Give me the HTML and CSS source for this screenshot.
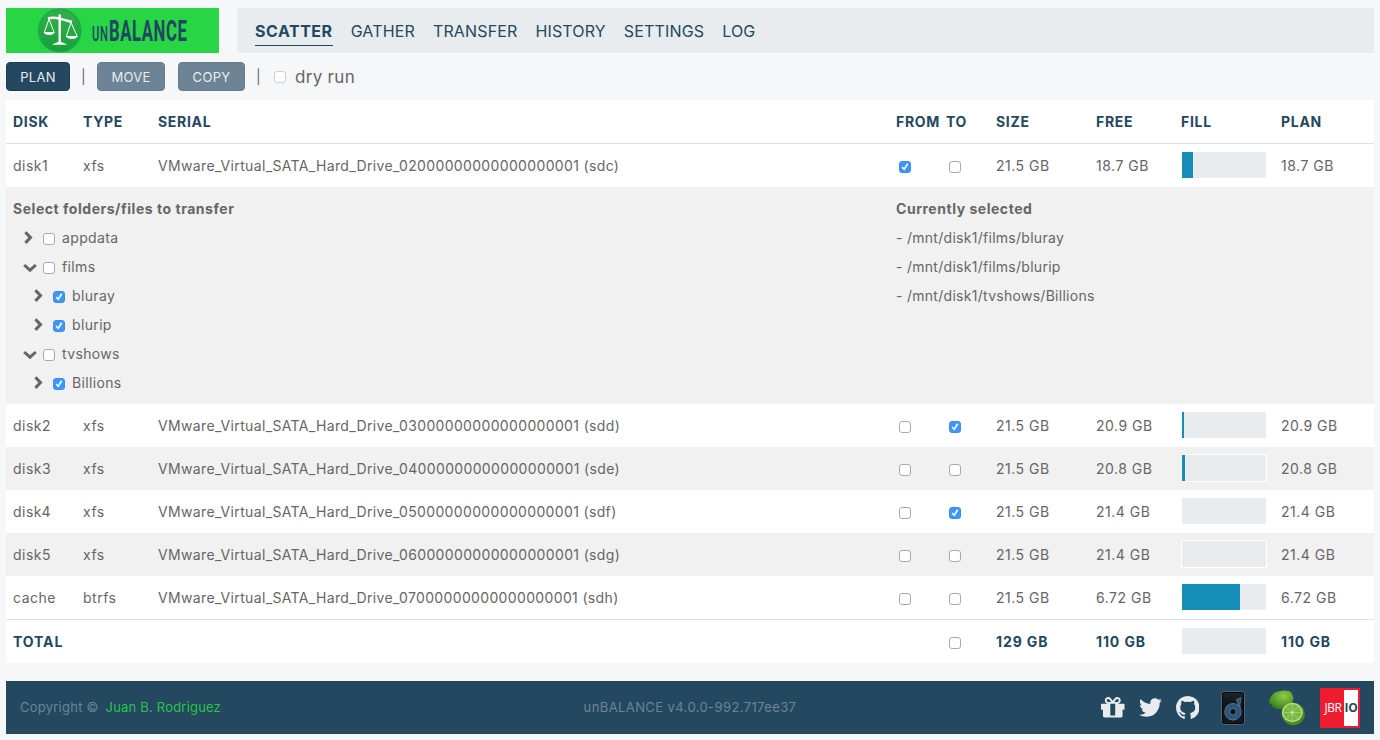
FILE: index.html
```html
<!DOCTYPE html>
<html lang="en">
<head>
<meta charset="utf-8">
<title>unBALANCE</title>
<link rel="stylesheet" href="styles.css">
</head>
<body>
<svg class="defs" width="0" height="0">
  <symbol id="right" viewBox="0 0 14 14"><path d="M2.400 1.300L7.500 6.600L2.400 11.900" fill="none" stroke="currentColor" stroke-width="3"/></symbol>
  <symbol id="down" viewBox="0 0 14 14"><path d="M1.200 5L7 10.200L12.800 5" fill="none" stroke="currentColor" stroke-width="3"/></symbol>
</svg>
<header class="header">
  <a class="logo">
    <svg width="86" height="45" viewBox="0 0 86 45">
      <defs><linearGradient id="disc" x1="0" y1="0" x2="0" y2="1"><stop offset="0" stop-color="#35b04b"/><stop offset="1" stop-color="#16a03a"/></linearGradient></defs>
      <circle cx="53.700" cy="22.500" r="21.200" fill="url(#disc)" stroke="#1da84c" stroke-width="1.400"/>
      <g fill="none" stroke="#fff">
        <path d="M42 10.200Q48 9 53.700 10.600T66 14" stroke-width="2.400"/>
        <path d="M53.700 6.500V35" stroke-width="2.400"/>
        <path d="M43 11L38.500 24M43 11L48 24M65 14.500L60.500 28M65 14.500L71 28" stroke-width="1"/>
      </g>
      <path d="M37.500 24H49Q47.500 27 43.200 27T37.500 24ZM59.500 28H72Q70.500 31 66 31T59.500 28ZM46 36.800Q50 34.300 53.700 33.500Q57.500 34.300 61 36.800Z" fill="#fff"/>
    </svg>
    <span class="word un">UN</span><span class="word balance">BALANCE</span>
  </a>
  <nav class="nav">
    <a class="nav-item active">SCATTER</a><a class="nav-item">GATHER</a><a class="nav-item">TRANSFER</a><a class="nav-item">HISTORY</a><a class="nav-item">SETTINGS</a><a class="nav-item">LOG</a>
  </nav>
</header>
<section class="toolbar">
  <button class="btn plan">PLAN</button><span class="sep">|</span><button class="btn move" disabled>MOVE</button><button class="btn copy" disabled>COPY</button><span class="sep">|</span>
  <label class="dry"><input class="check" type="checkbox" disabled>dry run</label>
</section>
<main class="table">
  <div class="row head"><span>DISK</span><span>TYPE</span><span>SERIAL</span><span>FROM</span><span>TO</span><span>SIZE</span><span>FREE</span><span>FILL</span><span>PLAN</span></div>
  <div class="row"><span>disk1</span><span>xfs</span><span class="serial">VMware_Virtual_SATA_Hard_Drive_02000000000000000001 (sdc)</span><span><input class="check" type="checkbox" checked></span><span><input class="check" type="checkbox"></span><span>21.5 GB</span><span>18.7 GB</span><span><i class="bar"><b style="width:11px"></b></i></span><span>18.7 GB</span></div>
  <div class="panel">
    <div class="tree">
      <h2>Select folders/files to transfer</h2>
      <div class="node"><svg class="chev"><use href="#right"/></svg><input class="check" type="checkbox">appdata</div>
      <div class="node"><svg class="chev"><use href="#down"/></svg><input class="check" type="checkbox">films</div>
      <div class="node child"><svg class="chev"><use href="#right"/></svg><input class="check" type="checkbox" checked>bluray</div>
      <div class="node child"><svg class="chev"><use href="#right"/></svg><input class="check" type="checkbox" checked>blurip</div>
      <div class="node"><svg class="chev"><use href="#down"/></svg><input class="check" type="checkbox">tvshows</div>
      <div class="node child"><svg class="chev"><use href="#right"/></svg><input class="check" type="checkbox" checked>Billions</div>
    </div>
    <div class="selected">
      <h2>Currently selected</h2>
      <div>- /mnt/disk1/films/bluray</div>
      <div>- /mnt/disk1/films/blurip</div>
      <div>- /mnt/disk1/tvshows/Billions</div>
    </div>
  </div>
  <div class="row"><span>disk2</span><span>xfs</span><span class="serial">VMware_Virtual_SATA_Hard_Drive_03000000000000000001 (sdd)</span><span><input class="check" type="checkbox"></span><span><input class="check" type="checkbox" checked></span><span>21.5 GB</span><span>20.9 GB</span><span><i class="bar"><b style="width:2px"></b></i></span><span>20.9 GB</span></div>
  <div class="row alt"><span>disk3</span><span>xfs</span><span class="serial">VMware_Virtual_SATA_Hard_Drive_04000000000000000001 (sde)</span><span><input class="check" type="checkbox"></span><span><input class="check" type="checkbox"></span><span>21.5 GB</span><span>20.8 GB</span><span><i class="bar"><b style="width:3px"></b></i></span><span>20.8 GB</span></div>
  <div class="row"><span>disk4</span><span>xfs</span><span class="serial">VMware_Virtual_SATA_Hard_Drive_05000000000000000001 (sdf)</span><span><input class="check" type="checkbox"></span><span><input class="check" type="checkbox" checked></span><span>21.5 GB</span><span>21.4 GB</span><span><i class="bar"></i></span><span>21.4 GB</span></div>
  <div class="row alt"><span>disk5</span><span>xfs</span><span class="serial">VMware_Virtual_SATA_Hard_Drive_06000000000000000001 (sdg)</span><span><input class="check" type="checkbox"></span><span><input class="check" type="checkbox"></span><span>21.5 GB</span><span>21.4 GB</span><span><i class="bar"></i></span><span>21.4 GB</span></div>
  <div class="row"><span>cache</span><span>btrfs</span><span class="serial">VMware_Virtual_SATA_Hard_Drive_07000000000000000001 (sdh)</span><span><input class="check" type="checkbox"></span><span><input class="check" type="checkbox"></span><span>21.5 GB</span><span>6.72 GB</span><span><i class="bar"><b style="width:58px"></b></i></span><span>6.72 GB</span></div>
  <div class="row total"><span>TOTAL</span><span></span><span></span><span></span><span><input class="check" type="checkbox"></span><span>129 GB</span><span>110 GB</span><span><i class="bar"></i></span><span>110 GB</span></div>
</main>
<footer class="footer">
  <div class="copyright">Copyright © <a>Juan B. Rodriguez</a></div>
  <div class="version">unBALANCE v4.0.0-992.717ee37</div>
  <div class="links">
    <svg class="gift" viewBox="128 128 1536 1536"><path d="M1056 1356v-716h-320v716q0 25 18 38.500t46 13.500h192q28 0 46-13.500t18-38.500zm-456-844h195l-126-161q-26-31-69-31-40 0-68 28t-28 68 28 68 68 28zm688-96q0-40-28-68t-68-28q-43 0-69 31l-125 161h194q40 0 68-28t28-68zm376 256v320q0 14-9 23t-23 9h-96v416q0 40-28 68t-68 28h-1088q-40 0-68-28t-28-68v-416h-96q-14 0-23-9t-9-23v-320q0-14 9-23t23-9h440q-93 0-158.500-65.500t-65.500-158.500 65.500-158.500 158.500-65.500q107 0 168 77l128 165 128-165q61-77 168-77 93 0 158.500 65.500t65.500 158.500-65.500 158.500-158.500 65.500h440q14 0 23 9t9 23z"/></svg>
    <svg class="twitter" viewBox="108 128 1576 1536"><path d="M1684 408q-67 98-162 167 1 14 1 42 0 130-38 259.500t-115.500 248.500-184.500 210.500-258 146-323 54.500q-271 0-496-145 35 4 78 4 225 0 401-138-105-2-188-64.500t-114-159.500q33 5 61 5 43 0 85-11-112-23-185.500-111.500t-73.500-205.500v-4q68 38 146 41-66-44-105-115t-39-154q0-88 44-163 121 149 294.500 238.500t371.500 99.500q-8-38-8-74 0-134 94.500-228.500t228.500-94.500q140 0 236 102 109-21 205-78-37 115-142 178 93-10 186-50z"/></svg>
    <svg class="github" viewBox="128 128 1536 1536"><path d="M896 128q209 0 385.500 103t279.500 279.500 103 385.500q0 251-146.500 451.500t-378.500 277.500q-27 5-40-7t-13-30q0-3 .5-76.500t.5-134.500q0-97-52-142 57-6 102.500-18t94-39 81-66.500 53-105 20.500-150.500q0-119-79-206 37-91-8-204-28-9-81 11t-92 44l-38 24q-93-26-192-26t-192 26q-16-11-42.500-27t-83.500-38.500-85-13.500q-45 113-8 204-79 87-79 206 0 85 20.500 150t52.500 105 80.500 67 94 39 102.500 18q-39 36-49 103-21 10-45 15t-57 5-65.500-21.500-55.500-62.500q-19-32-48.500-52t-49.500-24l-20-3q-21 0-29 4.500t-5 11.500 9 14 13 12l7 5q22 10 43.500 38t31.500 51l10 23q13 38 44 61.500t67 30 69.500 7 55.500-3.500l23-4q0 38 .5 88.500t.5 54.500q0 18-13 30t-40 7q-232-77-378.500-277.500t-146.500-451.500q0-209 103-385.500t279.500-279.500 385.500-103z"/></svg>
    <svg class="disk" viewBox="0 0 26 36">
      <defs><linearGradient id="case" x1="0" y1="0" x2="0" y2="1"><stop offset="0" stop-color="#1d242b"/><stop offset=".5" stop-color="#0c1116"/><stop offset="1" stop-color="#151b21"/></linearGradient></defs>
      <rect x="1.500" y="1.500" width="23" height="33" rx="3" fill="url(#case)" stroke="#607381" stroke-width=".8"/>
      <rect x="2.500" y="2.500" width="21" height="31" rx="2" fill="none" stroke="#05090c"/>
      <path d="M16.400 9.500L21 7.500L20.200 13.500L19.800 20L17.300 17.500L17.700 13.500Z" fill="#2a587d" stroke="#6e8798" stroke-width=".6"/>
      <circle cx="13" cy="21.700" r="5.700" fill="none" stroke="#6e8798" stroke-width="6"/>
      <circle cx="13" cy="21.700" r="5.700" fill="none" stroke="#2a587d" stroke-width="4.800"/>
    </svg>
    <svg class="lime" viewBox="0 0 38 38">
      <defs><radialGradient id="whole" cx=".6" cy=".3" r=".8"><stop offset="0" stop-color="#91ca49"/><stop offset=".5" stop-color="#5aa52b"/><stop offset="1" stop-color="#26701a"/></radialGradient></defs>
      <path d="M.8 14Q1.500 6 8 3Q15 .5 21 2Q24 3 25.500 9Q24.500 17 17 19.500Q10 21.500 5 18Q4 15.500 .8 14Z" fill="url(#whole)"/>
      <ellipse cx="25.300" cy="25" rx="11.500" ry="11.200" fill="#468c20"/>
      <ellipse cx="24.300" cy="23.500" rx="10.400" ry="9.700" fill="#c3dc87"/>
      <ellipse cx="24.300" cy="23.500" rx="9" ry="8.300" fill="#79b947"/>
      <path d="M24.300 15.500V31.500M16 23.500H32.800M18.300 17.500L30.300 29.500M30.300 17.500L18.300 29.500" stroke="#b6d67f" stroke-width=".7"/>
      <circle cx="24.300" cy="23.500" r="1.200" fill="#dcebb4"/>
    </svg>
    <div class="jbr"><span>JBR</span><strong>IO</strong></div>
  </div>
</footer>
</body>
</html>
```
FILE: styles.css
```css
* { box-sizing: border-box; }
body { margin: 0; padding: 8px 6px 6px; height: 740px; background: #f6f7f9; color: #666; font-family: Inter, sans-serif; font-size: 14px; letter-spacing: .5px; overflow: hidden; }
.defs { position: absolute; }
.header { display: flex; gap: 18px; height: 45px; }
.logo { display: flex; align-items: flex-start; width: 213px; height: 45px; background: #27d545; color: #214662; }
.word { font-family: Roboto, sans-serif; letter-spacing: 1px; transform-origin: 0 0; white-space: nowrap; }
.un { width: 16.500px; margin-top: 14.500px; font-size: 20px; line-height: 22px; font-weight: 500; transform: scaleX(.56); }
.balance { width: 78px; margin-top: 6.500px; font-size: 29.300px; line-height: 32px; font-weight: 700; transform: scaleX(.57); }
.nav { flex: 1; display: flex; align-items: center; gap: 18px; padding-left: 18px; background: #e8ecef; color: #234860; font-size: 16px; letter-spacing: .15px; }
.nav-item { height: 30px; line-height: 30px; border-bottom: 1px solid transparent; }
.nav-item.active { font-weight: 700; letter-spacing: .52px; border-color: #234860; }
.toolbar { display: flex; align-items: center; height: 29px; margin: 9px 0; font-size: 16px; }
.btn { height: 29px; padding: 1px 0 0; border: 1px solid #1c3c52; border-radius: 4px; background: #234860; color: #e8ecef; font: 13px Inter, sans-serif; letter-spacing: .3px; }
.btn:disabled { background: #6c8495; border-color: #657d8e; }
.plan { width: 64px; }
.move { width: 68px; margin-right: 13px; }
.copy { width: 67px; }
.sep { width: 27px; text-align: center; font-size: 14px; }
.dry { display: flex; align-items: center; gap: 9px; margin-left: 2px; font-size: 17px; letter-spacing: .3px; }
.check { appearance: none; flex: none; display: block; width: 12px; height: 12px; margin: 0; border: 1px solid #aaa; border-radius: 3px; background: #fff; }
.check:disabled { border-color: #d0d0d0; }
.check:checked { background: #3d97fb; border-color: #3d8df0; }
.check:checked::after { content: ""; display: block; width: 10px; height: 10px; background: #fff; clip-path: polygon(16% 57%, 28% 46%, 41% 61%, 69% 13%, 84% 22%, 44% 84%); }
.row { display: grid; grid-template-columns: 70px 75px 1fr 50px 50px 100px 85px 100px 100px; align-items: center; height: 43px; background: #fff; }
.row > span { padding-left: 7px; white-space: nowrap; }
.row .serial { letter-spacing: .35px; }
.row .check { margin: 3px 0 0 3px; }
.row.alt { background: #f1f1f1; }
.row.head { height: 44px; border-bottom: 1px solid #dbdfe1; color: #234860; font-weight: 700; letter-spacing: .7px; }
.row.total { height: 44px; border-top: 1px solid #dbdfe1; color: #234860; font-weight: 700; letter-spacing: .9px; }
.bar { display: block; width: 86px; height: 28px; margin-top: -1px; border: 1px solid #fff; background: #e8ecef; }
.bar b { display: block; height: 26px; background: #168cb9; }
.panel { display: grid; grid-template-columns: 1fr 485px; height: 217px; padding-top: 7px; background: #f1f1f1; line-height: 29px; }
.panel h2 { margin: 0; font-size: 14px; font-weight: 700; letter-spacing: .53px; }
.tree { padding-left: 7px; }
.selected { padding-left: 7px; letter-spacing: .28px; }
.node { display: flex; align-items: center; height: 29px; padding-left: 10px; letter-spacing: .35px; }
.node.child { padding-left: 20px; }
.node .check { margin: 3px 7px 0 6px; }
.chev { width: 14px; height: 14px; }
.footer { display: grid; grid-template-columns: 1fr 1fr 1fr; align-items: center; height: 53px; margin-top: 18px; padding: 0 14px; background: #234860; color: #6c8495; font-size: 13px; letter-spacing: .4px; }
.copyright { padding-bottom: 2px; letter-spacing: .24px; }
.copyright a { margin-left: 3px; color: #27c545; letter-spacing: .2px; }
.version { padding-bottom: 2px; text-align: center; }
.links { display: flex; justify-content: flex-end; align-items: center; fill: #e8ecef; }
.gift, .github { width: 23.500px; height: 23.500px; }
.twitter { width: 23px; height: 23px; margin: 0 14px; }
.disk { width: 26px; height: 36px; margin-left: 20.500px; }
.lime { width: 38px; height: 38px; margin: 0 14px 0 22px; }
.jbr { display: flex; align-items: center; width: 40px; height: 40px; border: 2px solid #ee1c2e; background: linear-gradient(90deg, #ee1c2e 22px, #fff 22px); font: 12px "Open Sans", sans-serif; letter-spacing: -.4px; color: #fff; }
.jbr span { width: 22px; text-align: center; }
.jbr strong { width: 14px; text-align: center; color: #254860; }
```
